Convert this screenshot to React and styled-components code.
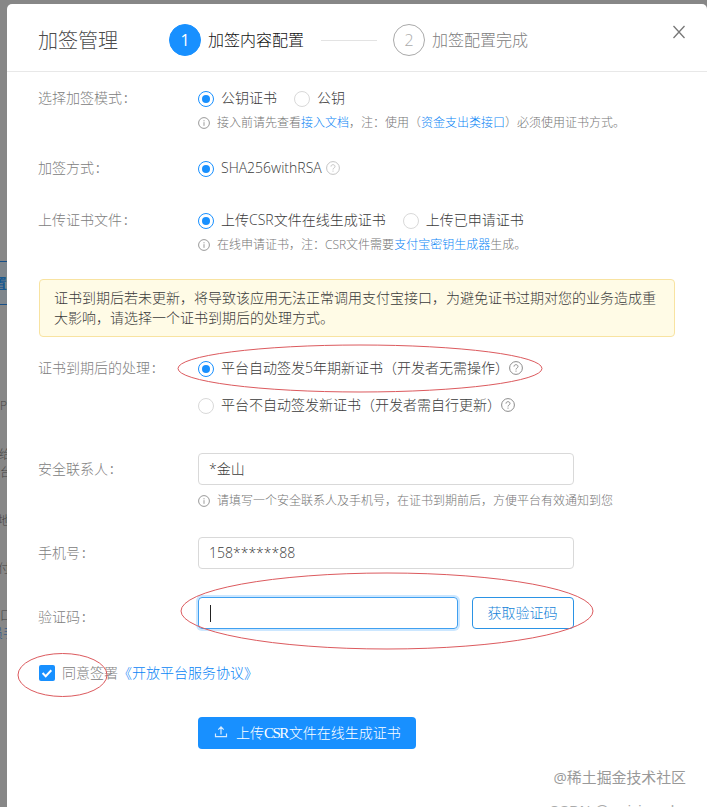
import React from "react";
import styled, { createGlobalStyle, css } from "styled-components";

const GlobalStyle = createGlobalStyle`
  * {
    box-sizing: border-box;
  }
  body {
    margin: 0;
    font-family: "Open Sans", "Noto Sans CJK SC", sans-serif;
    font-size: 14px;
    font-weight: 300;
    color: #3a3a3a;
  }
`;

const Page = styled.div`
  position: relative;
  display: flex;
  width: 707px;
  height: 807px;
  padding-top: 4px;
  overflow: hidden;
  background: #878787;
`;

const Gutter = styled.div`
  width: 7px;
  flex: none;
  overflow: hidden;
`;

const GutterText = styled.div`
  height: 18px;
  margin-top: ${(p) => p.$top}px;
  overflow: hidden;
  font-size: 12px;
  line-height: 18px;
  text-indent: ${(p) => p.$indent || 0}px;
  white-space: nowrap;
  color: ${(p) => (p.$blue ? "#174f87" : "#444")};
`;

const GutterTab = styled.div`
  height: 44px;
  margin-top: 257px;
  padding-top: 12px;
  overflow: hidden;
  border-top: 1px solid #174f87;
  border-bottom: 1px solid #174f87;
  background: #7f868c;
  font-size: 14px;
  line-height: 18px;
  font-weight: 700;
  text-indent: -7px;
  white-space: nowrap;
  color: #17588f;
`;

const Modal = styled.div`
  flex: 1;
  min-width: 0;
  height: 830px;
  background: #fff;
  border-radius: 5px 5px 0 0;
`;

const Header = styled.header`
  display: flex;
  height: 68px;
  padding: 0 21px 0 31px;
  border-bottom: 1px solid #e8e8e8;
`;

const Title = styled.h1`
  width: 131px;
  margin: 0;
  font-size: 20px;
  font-weight: 300;
  line-height: 73px;
  color: #4c4c4c;
`;

const Steps = styled.div`
  display: flex;
  align-items: center;
  height: 72px;
  font-size: 16px;
`;

const StepCircle = styled.span`
  width: 32px;
  height: 32px;
  margin-right: 7px;
  border: 1px solid ${(p) => (p.$active ? "#1890ff" : "#aaa")};
  border-radius: 50%;
  background: ${(p) => (p.$active ? "#1890ff" : "#fff")};
  color: ${(p) => (p.$active ? "#fff" : "#aaa")};
  font-weight: ${(p) => (p.$active ? 400 : 300)};
  line-height: 30px;
  text-align: center;
`;

const StepName = styled.span`
  padding-bottom: 2px;
  color: ${(p) => (p.$active ? "#111" : "#808080")};
`;

const StepLine = styled.i`
  width: 56px;
  height: 1px;
  margin: 0 16px 0 17px;
  background: #e3e3e3;
`;

const Close = styled.button`
  width: 14px;
  height: 14px;
  margin: 21px 0 0 auto;
  padding: 0;
  border: 0;
  background: none;
  svg {
    display: block;
  }
`;

const Form = styled.div`
  padding: 0 32px 0 31px;
`;

const Row = styled.div`
  display: flex;
  margin-top: ${(p) => p.$top}px;
`;

const LabelBox = styled.div`
  width: 160px;
  flex: none;
  line-height: ${(p) => p.$line}px;
  color: #808080;
`;

const Colon = styled.span`
  margin-left: 2px;
  font-weight: 400;
`;

const Field = styled.div`
  flex: 1;
  min-width: 0;
`;

const Radios = styled.div`
  display: flex;
  align-items: center;
  height: 21px;
  margin-top: ${(p) => p.$top || 0}px;
`;

const RadioLabel = styled.label`
  display: flex;
  align-items: center;
  margin-right: 17px;
  white-space: nowrap;
`;

const Dot = styled.i`
  display: flex;
  align-items: center;
  justify-content: center;
  width: 16px;
  height: 16px;
  margin: 2px 7px 0 0;
  border: 1px solid ${(p) => (p.$on ? "#1890ff" : "#d9d9d9")};
  border-radius: 50%;
  ${(p) =>
    p.$on &&
    css`
      &::after {
        content: "";
        width: 8px;
        height: 8px;
        border-radius: 50%;
        background: #1890ff;
      }
    `}
`;

const RadioText = styled.span`
  display: flex;
  align-items: center;
  padding-bottom: 1px;
`;

const HelpIcon = styled.svg`
  flex: none;
  margin: 1px 0 0 ${(p) => p.$gap || 0}px;
  color: ${(p) => (p.$light ? "#c4c4c4" : "#8c8c8c")};
`;

const HintLine = styled.div`
  display: flex;
  align-items: center;
  height: 18px;
  margin-top: ${(p) => p.$top}px;
  font-size: 12px;
  line-height: 18px;
  white-space: nowrap;
  color: #757575;
  svg {
    margin: 0 7px 0 0;
  }
`;

const Link = styled.a`
  color: #0a85f5;
`;

const Alert = styled.div`
  height: 58px;
  margin: 25px 0 0 1px;
  padding: 8px 14px;
  border: 1px solid #f8e3a1;
  border-radius: 4px;
  background: #fffbe6;
  line-height: 20px;
`;

const Input = styled.div`
  display: flex;
  align-items: center;
  width: ${(p) => p.$width}px;
  height: 32px;
  padding: 0 10px 2px;
  border: 1px solid ${(p) => (p.$focus ? "#40a0f0" : "#d9d9d9")};
  border-radius: 4px;
  box-shadow: ${(p) => (p.$focus ? "0 0 0 2px #cce7ff" : "none")};
`;

const Caret = styled.i`
  width: 1px;
  height: 17px;
  margin: 2px 0 0 1px;
  background: #222;
`;

const CodeButton = styled.button`
  width: 102px;
  height: 32px;
  margin-left: 14px;
  padding: 0 1px 2px 0;
  border: 1px solid #2b93e5;
  border-radius: 4px;
  background: #fff;
  font: inherit;
  color: #1583d8;
`;

const Agreement = styled.div`
  display: flex;
  align-items: center;
  height: 20px;
  margin: 25px 0 0 1px;
  color: #808080;
`;

const Checkbox = styled.span`
  width: 16px;
  height: 16px;
  margin: 1px 7px 0 0;
  border-radius: 2px;
  background: #1890ff;
  svg {
    display: block;
  }
`;

const Submit = styled.button`
  display: flex;
  align-items: center;
  width: 218px;
  height: 32px;
  margin: 35px 0 0 160px;
  padding: 0 0 2px 16px;
  border: 0;
  border-radius: 4px;
  background: #1890ff;
  font: inherit;
  white-space: nowrap;
  color: #fff;
  svg {
    margin-right: 8px;
  }
  b {
    font-family: "Liberation Serif", serif;
    font-size: 15px;
    letter-spacing: -1.5px;
    margin-right: 1px;
  }
`;

const Watermark = styled.div`
  margin-top: 16px;
  padding-right: 21px;
  font-size: 14.9px;
  line-height: 24px;
  font-weight: 400;
  text-align: right;
  color: #999;
`;

const Credit = styled.div`
  margin-top: 13px;
  padding-right: 33px;
  font-family: "Liberation Sans", sans-serif;
  font-size: 14.6px;
  line-height: 18px;
  text-align: right;
  color: #aaa;
`;

const Marks = styled.svg`
  position: absolute;
  top: 0;
  left: 0;
  pointer-events: none;
`;

function Label({ line = 22, children }) {
  return (
    <LabelBox $line={line}>
      {children}
      <Colon>:</Colon>
    </LabelBox>
  );
}

function Radio({ on, children }) {
  return (
    <RadioLabel>
      <Dot $on={on} />
      <RadioText>{children}</RadioText>
    </RadioLabel>
  );
}

function Help({ light, gap }) {
  return (
    <HelpIcon $light={light} $gap={gap} width="14" height="14" viewBox="0 0 14 14" fill="none" stroke="currentColor">
      <circle cx="7" cy="7" r="6.4" />
      <path d="M5 5.6C5 4.3 5.9 3.7 7 3.7s2 .7 2 1.8c0 1.5-2 1.5-2 3" />
      <path d="M7 9.6v1.1" />
    </HelpIcon>
  );
}

function Hint({ top, children }) {
  return (
    <HintLine $top={top}>
      <svg width="12" height="12" viewBox="0 0 12 12" fill="none" stroke="#999">
        <circle cx="6" cy="6" r="5.4" />
        <path d="M6 5.2v3.6M6 3.2v1.1" />
      </svg>
      <span>{children}</span>
    </HintLine>
  );
}

function App() {
  return (
    <Page>
      <GlobalStyle />
      <Gutter>
        <GutterTab>置</GutterTab>
        <GutterText $top={92}>P</GutterText>
        <GutterText $top={31} $indent={-1}>给</GutterText>
        <GutterText $top={0}>台</GutterText>
        <GutterText $top={30} $indent={-2}>地</GutterText>
        <GutterText $top={30} $indent={-2}>付</GutterText>
        <GutterText $top={29}>口</GutterText>
        <GutterText $top={0} $indent={-9} $blue>员手</GutterText>
      </Gutter>
      <Modal>
        <Header>
          <Title>加签管理</Title>
          <Steps>
            <StepCircle $active>1</StepCircle>
            <StepName $active>加签内容配置</StepName>
            <StepLine />
            <StepCircle>2</StepCircle>
            <StepName>加签配置完成</StepName>
          </Steps>
          <Close aria-label="关闭">
            <svg width="14" height="14" viewBox="0 0 14 14" stroke="#777" strokeWidth="1.3">
              <path d="M1.5 1l11 12M12.5 1l-11 12" />
            </svg>
          </Close>
        </Header>
        <Form>
          <Row $top={15}>
            <Label>选择加签模式</Label>
            <Field>
              <Radios>
                <Radio on>公钥证书</Radio>
                <Radio>公钥</Radio>
              </Radios>
              <Hint top={6}>
                接入前请先查看<Link>接入文档</Link>，注：使用（<Link>资金支出类接口</Link>）必须使用证书方式。
              </Hint>
            </Field>
          </Row>
          <Row $top={25}>
            <Label>加签方式</Label>
            <Field>
              <Radios>
                <Radio on>
                  SHA256withRSA
                  <Help light gap={4} />
                </Radio>
              </Radios>
            </Field>
          </Row>
          <Row $top={30}>
            <Label>上传证书文件</Label>
            <Field>
              <Radios>
                <Radio on>上传CSR文件在线生成证书</Radio>
                <Radio>上传已申请证书</Radio>
              </Radios>
              <Hint top={6}>
                在线申请证书，注：CSR文件需要<Link>支付宝密钥生成器</Link>生成。
              </Hint>
            </Field>
          </Row>
          <Alert>
            证书到期后若未更新，将导致该应用无法正常调用支付宝接口，为避免证书过期对您的业务造成重大影响，请选择一个证书到期后的处理方式。
          </Alert>
          <Row $top={20}>
            <Label>证书到期后的处理</Label>
            <Field>
              <Radios>
                <Radio on>
                  平台自动签发5年期新证书（开发者无需操作）
                  <Help />
                </Radio>
              </Radios>
              <Radios $top={16}>
                <Radio>
                  平台不自动签发新证书（开发者需自行更新）
                  <Help />
                </Radio>
              </Radios>
            </Field>
          </Row>
          <Row $top={38}>
            <Label line={32}>安全联系人</Label>
            <Field>
              <Input $width={376}>*金山</Input>
              <Hint top={7}>请填写一个安全联系人及手机号，在证书到期前后，方便平台有效通知到您</Hint>
            </Field>
          </Row>
          <Row $top={27}>
            <Label line={32}>手机号</Label>
            <Input $width={376}>158******88</Input>
          </Row>
          <Row $top={28}>
            <Label line={40}>验证码</Label>
            <Input $width={260} $focus>
              <Caret />
            </Input>
            <CodeButton>获取验证码</CodeButton>
          </Row>
          <Agreement>
            <Checkbox>
              <svg width="16" height="16" viewBox="0 0 16 16" fill="none" stroke="#fff" strokeWidth="2">
                <path d="M3.6 8l3.1 3.2 5.6-5.9" />
              </svg>
            </Checkbox>
            同意签署<Link>《开放平台服务协议》</Link>
          </Agreement>
          <Submit>
            <svg width="14" height="14" viewBox="0 0 14 14" fill="none" stroke="#d5ebff" strokeWidth="1.2">
              <path d="M1.5 8.5v3.2h11V8.5M7 9.5V2M4.3 4.6L7 1.9l2.7 2.7" />
            </svg>
            <span>
              上传<b>CSR</b>文件在线生成证书
            </span>
          </Submit>
        </Form>
        <Watermark>@稀土掘金技术社区</Watermark>
        <Credit>CSDN @weixin_ad</Credit>
      </Modal>
      {/* hand drawn highlights around the important fields */}
      <Marks width="707" height="807" fill="none" stroke="#dc5a5e">
        <ellipse cx="360" cy="368.5" rx="182" ry="23.5" />
        <ellipse cx="387" cy="611" rx="206" ry="38" />
        <ellipse cx="62.5" cy="675" rx="44.5" ry="21.5" />
      </Marks>
    </Page>
  );
}

export default App;
